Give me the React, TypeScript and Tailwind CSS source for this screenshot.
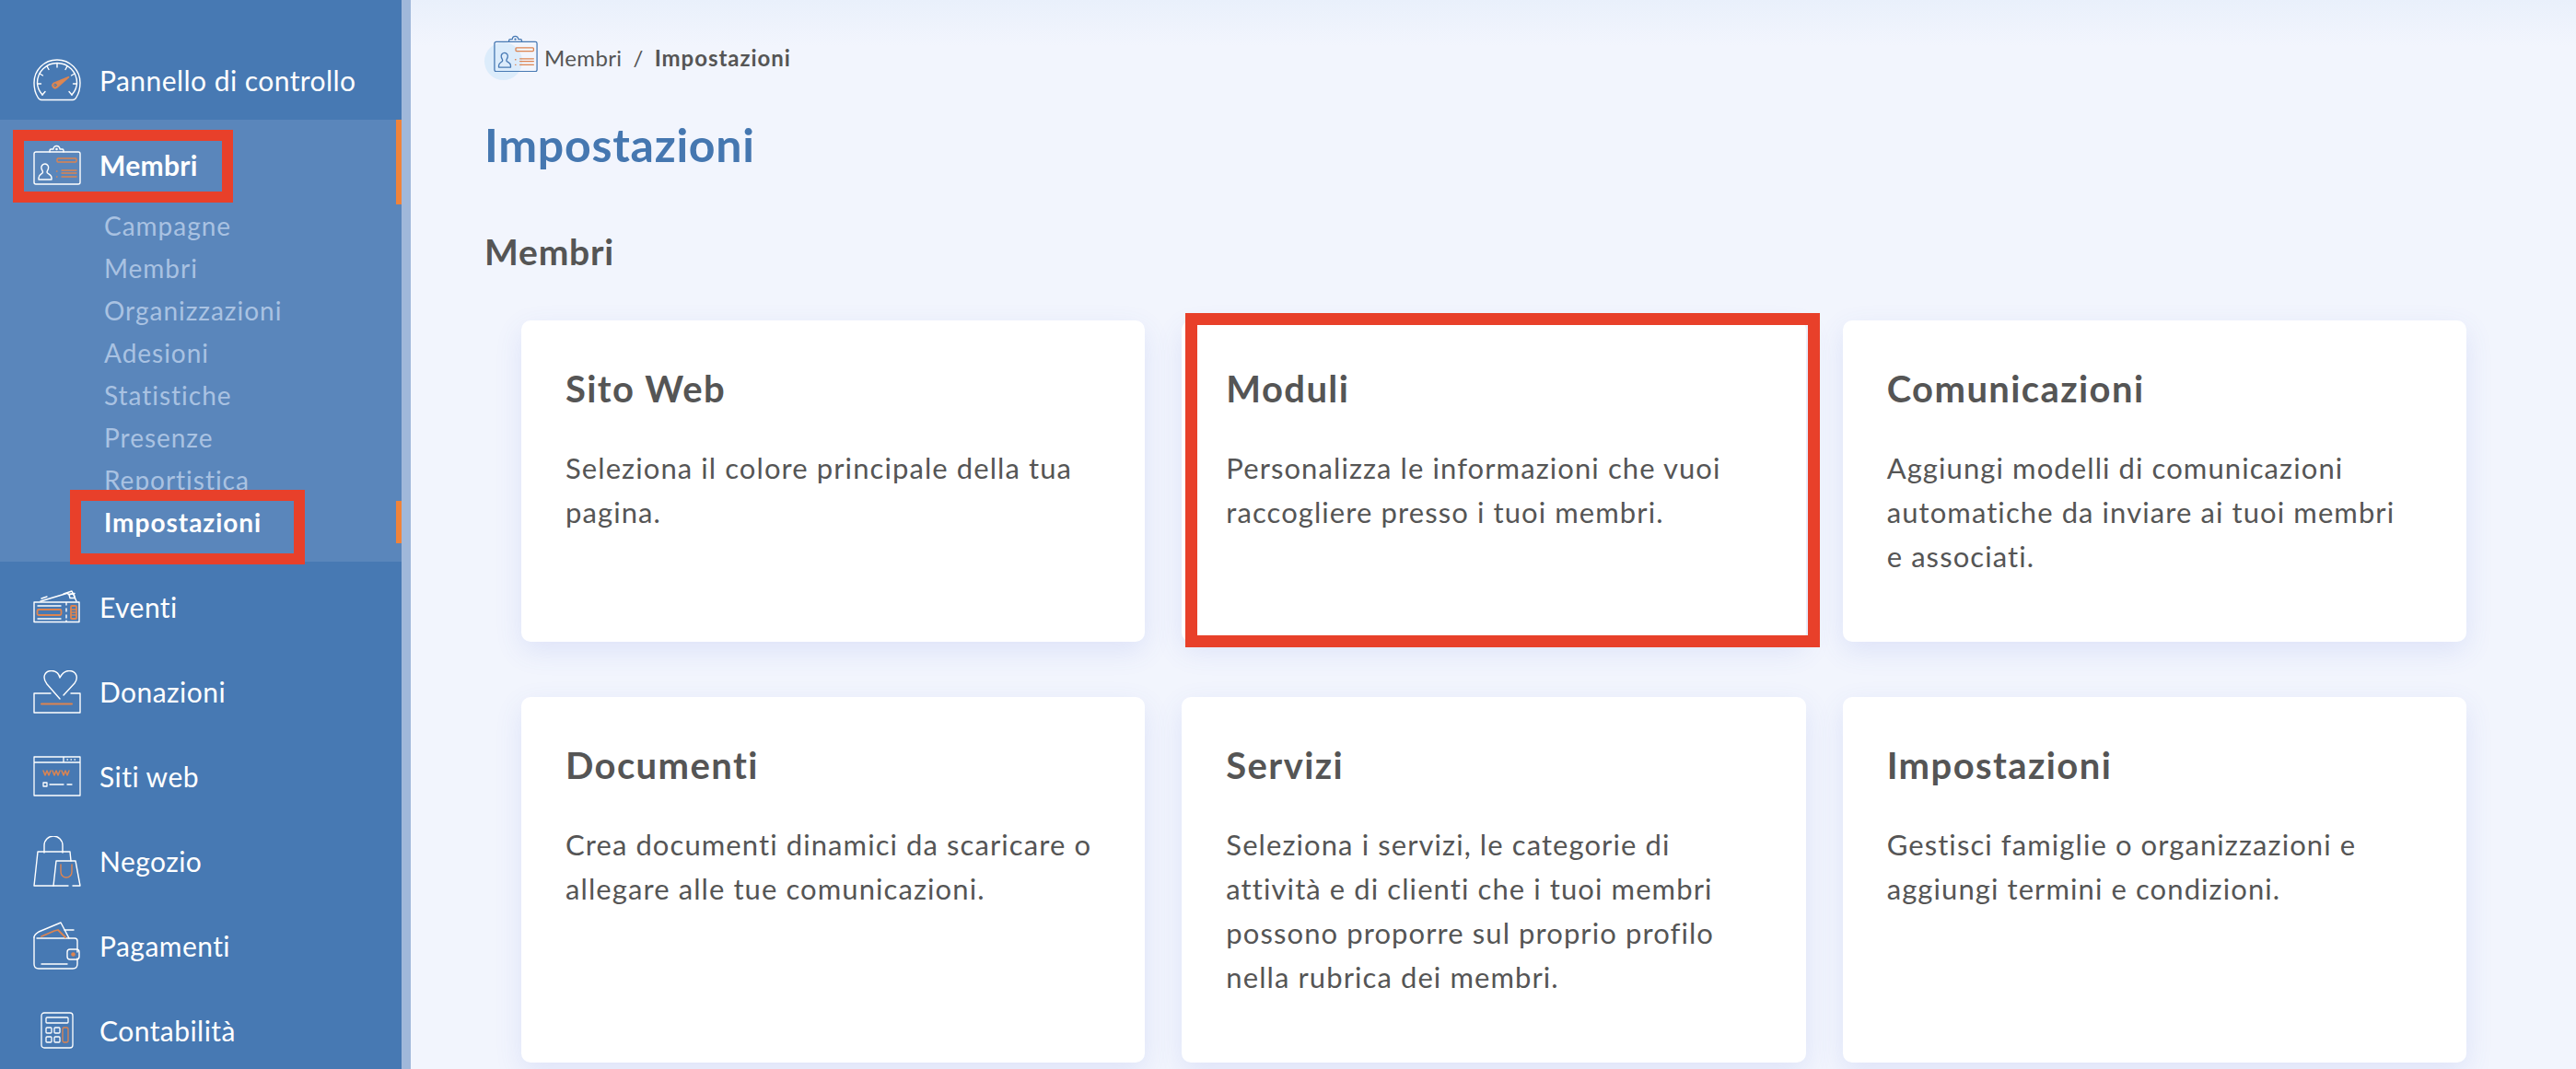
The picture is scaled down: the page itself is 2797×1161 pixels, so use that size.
import { ReactNode } from 'react';

const WHITE = '#ffffff';
const ORANGE = '#dd8450';

const GaugeIcon = () => (
    <svg width="52" height="46" viewBox="0 0 52 46" fill="none" stroke={WHITE} strokeWidth="1.4" strokeLinecap="round">
        <path d="M9 44.500h34c2 0 3-1 4-3 2.500-4 4-9 4-15.500C51 12 40 1 26 1S1 12 1 26c0 6.500 1.500 11.500 4 15.500 1 2 2 3 4 3z" />
        <path d="M10 39C6.500 35 4.500 31 4.500 26 4.500 14 14 4.500 26 4.500S47.500 14 47.500 26c0 5-2 9-5.500 13" />
        <path d="M26 5v4M15 8l2 3.500M7 16l3.500 2M4.500 27h4M43.500 27h4M41.500 18l3.500-2M35 11.500L37 8M10 39l3-3.500M42 39l-3-3.500" />
        <path d="M22 26.500l17-7-13 11.500a3 3 0 0 1-4-4.500z" fill="#d98a55" stroke={ORANGE} />
        <circle cx="24" cy="28.500" r="1.300" stroke="#4779b3" strokeWidth="1" />
    </svg>
);

const BadgeIcon = ({ line = WHITE, size = 52 }: { line?: string; size?: number }) => (
    <svg width={size} height={(size * 44) / 52} viewBox="0 0 52 44" fill="none" stroke={line} strokeWidth="1.4" strokeLinecap="round" strokeLinejoin="round">
        <path d="M18 8H3a2 2 0 0 0-2 2v31a2 2 0 0 0 2 2h46a2 2 0 0 0 2-2V10a2 2 0 0 0-2-2H33" />
        <path d="M18 8V6.500a1.500 1.500 0 0 1 1.500-1.500H22a3.500 3.500 0 0 1 7 0h2.500A1.500 1.500 0 0 1 33 6.500V8z" />
        <circle cx="25.500" cy="5" r="0.600" />
        <path d="M13 21a4 4 0 0 1 3.500 5c-.5 2-1.500 2.500-1.500 4 0 2 5 2 5 6v2H6v-2c0-4 4.500-4 4.500-6 0-1.500-1-2-1.500-4a4 4 0 0 1 4-5z" />
        <rect x="26" y="15" width="21" height="4" rx="1" stroke={ORANGE} />
        <path d="M25.500 29h.5M25.500 35h.5M31 28h16M31 31h16M31 35h16" stroke={ORANGE} />
    </svg>
);

const TicketIcon = () => (
    <svg width="52" height="36" viewBox="0 0 52 36" fill="none" stroke={WHITE} strokeWidth="1.4" strokeLinecap="round" strokeLinejoin="round">
        <path d="M1 13h49v21.500H1zM36 13v3M36 20v3M36 27v3M36 33v1.500" />
        <path d="M8 12l30-9M9 9l6-2M33 4l9-3 5 11M38 4.500l7-1" />
        <path d="M39 5l5-1.500 1.500 5H40z" />
        <path d="M5 17h25M5 31h25" />
        <rect x="4.500" y="21" width="26" height="6" rx="1.500" stroke={ORANGE} strokeWidth="1.800" />
        <rect x="41" y="17" width="6" height="14" rx="1" stroke={ORANGE} strokeWidth="1.800" />
        <path d="M41 21h6M41 24h6M41 27h6" stroke={ORANGE} />
    </svg>
);

const HeartIcon = () => (
    <svg width="52" height="47" viewBox="0 0 52 47" fill="none" stroke={WHITE} strokeWidth="1.4" strokeLinecap="round" strokeLinejoin="round">
        <path d="M29 31L15 15C9 7 13 .5 20 .5 25 .5 28 4 29 8 31 4 34 .5 39 .5 46 .5 50 7 45 14L33 27" />
        <path d="M19 25H1v21h50V25H41" />
        <path d="M9 36.500h33" stroke={ORANGE} strokeWidth="2" />
    </svg>
);

const BrowserIcon = () => (
    <svg width="52" height="44" viewBox="0 0 52 44" fill="none" stroke={WHITE} strokeWidth="1.3" strokeLinecap="round" strokeLinejoin="round">
        <path d="M1 1h50v42H1zM1 7h50M33 1v6" />
        <path d="M37 4h.5M41 4h.5M45 4h.5" />
        <path d="M11 16l2 5 2-5 2 5 2-5M21 16l2 5 2-5 2 5 2-5M31 16l2 5 2-5 2 5 2-5" stroke={ORANGE} strokeWidth="1.500" />
        <rect x="11" y="29" width="4" height="4" />
        <path d="M18 31h15M37 31h5" />
    </svg>
);

const BagIcon = () => (
    <svg width="52" height="55" viewBox="0 0 52 55" fill="none" stroke={WHITE} strokeWidth="1.4" strokeLinecap="round" strokeLinejoin="round">
        <path d="M22 54H1L5 17h35l1 10" />
        <path d="M12 18V10a10 10 0 0 1 20 0v8" />
        <path d="M22 54l3-27h21l5 27H43M38 54H22" />
        <path d="M30 31v8a6 6 0 0 0 12 0v-8" stroke={ORANGE} />
    </svg>
);

const WalletIcon = () => (
    <svg width="52" height="52" viewBox="0 0 52 52" fill="none" stroke={WHITE} strokeWidth="1.4" strokeLinecap="round" strokeLinejoin="round">
        <path d="M1 17c0-3 2-4 5-6l24-10 9 17" />
        <path d="M34 9h10M4 18h41c2 0 3 1 3 3v12M1 17v29c0 3 2 5 5 5h37c3 0 5-2 5-5v-6" />
        <rect x="37" y="30" width="13" height="11" rx="3" />
        <circle cx="43.500" cy="35.500" r="1.600" fill={ORANGE} stroke={ORANGE} />
        <path d="M9 46h28" />
        <path d="M9 16l14-6 4-1 2 2 3 3 3 3" stroke={ORANGE} strokeWidth="1.800" />
    </svg>
);

const CalcIcon = () => (
    <svg width="36" height="40" viewBox="0 0 36 40" fill="none" stroke={WHITE} strokeWidth="1.3" strokeLinecap="round" strokeLinejoin="round">
        <rect x="1" y="1" width="34" height="38" rx="3" />
        <rect x="6" y="6" width="24" height="6" rx="1" />
        <rect x="6" y="17" width="6" height="6" rx="1" />
        <rect x="15" y="17" width="6" height="6" rx="1" />
        <rect x="6" y="27" width="6" height="6" rx="1" />
        <rect x="15" y="27" width="6" height="6" rx="1" />
        <rect x="24" y="17" width="6" height="16" rx="1.500" stroke={ORANGE} />
    </svg>
);

const NavItem = ({ icon, label }: { icon: ReactNode; label: string }) => (
    <div className="flex h-[92px] items-center text-white">
        <div className="ml-[36px] flex w-[52px] justify-center">{icon}</div>
        <span className="ml-[20px] text-[30px] tracking-[0.015em]">{label}</span>
    </div>
);

const RedBox = ({ className }: { className: string }) => (
    <div className={`absolute border-[12px] border-[#e8402a] ${className}`}></div>
);

const subItems = ['Campagne', 'Membri', 'Organizzazioni', 'Adesioni', 'Statistiche', 'Presenze', 'Reportistica'];

const Sidebar = () => (
    <aside className="flex h-full w-[446px] shrink-0 border-r-[10px] border-[#a0b8da] bg-[#4779b3]">
        <div className="w-full">
            <div className="flex h-[130px] items-end">
                <div className="flex h-[86px] w-full items-center text-white">
                    <div className="ml-[36px] flex w-[52px] justify-center">
                        <GaugeIcon />
                    </div>
                    <span className="ml-[20px] text-[30px] tracking-[0.015em]">Pannello di controllo</span>
                </div>
            </div>

            <div className="bg-[#5a86bb] pb-[20px]">
                <div className="relative flex h-[92px] items-center border-r-[6px] border-[#f0833a] pt-[6px] text-white">
                    <div className="ml-[36px] flex w-[52px] justify-center">
                        <BadgeIcon />
                    </div>
                    <span className="ml-[20px] text-[30px] font-bold tracking-[0.01em]">Membri</span>
                    <RedBox className="left-[14px] top-[11px] h-[79px] w-[239px]" />
                </div>
                {subItems.map((item) => (
                    <div key={item} className="flex h-[46px] items-center pl-[113px] text-[28px] tracking-[0.035em] text-[#a9c2e2]">
                        {item}
                    </div>
                ))}
                <div className="relative flex h-[46px] items-center border-r-[6px] border-[#f0833a] pl-[113px] text-[28px] font-bold tracking-[0.035em] text-white">
                    Impostazioni
                    <RedBox className="left-[76px] top-[-12px] h-[81px] w-[255px]" />
                </div>
            </div>

            <div className="mt-[3px]">
                <NavItem icon={<TicketIcon />} label="Eventi" />
                <NavItem icon={<HeartIcon />} label="Donazioni" />
                <NavItem icon={<BrowserIcon />} label="Siti web" />
                <NavItem icon={<BagIcon />} label="Negozio" />
                <NavItem icon={<WalletIcon />} label="Pagamenti" />
                <NavItem icon={<CalcIcon />} label="Contabilità" />
            </div>
        </div>
    </aside>
);

const cards = [
    { title: 'Sito Web', text: 'Seleziona il colore principale della tua pagina.' },
    { title: 'Moduli', text: 'Personalizza le informazioni che vuoi raccogliere presso i tuoi membri.', marked: true },
    { title: 'Comunicazioni', text: 'Aggiungi modelli di comunicazioni automatiche da inviare ai tuoi membri e associati.' },
    { title: 'Documenti', text: 'Crea documenti dinamici da scaricare o allegare alle tue comunicazioni.' },
    { title: 'Servizi', text: 'Seleziona i servizi, le categorie di attività e di clienti che i tuoi membri possono proporre sul proprio profilo nella rubrica dei membri.' },
    { title: 'Impostazioni', text: 'Gestisci famiglie o organizzazioni e aggiungi termini e condizioni.' },
];

const Card = ({ title, text, marked }: { title: string; text: string; marked?: boolean }) => (
    <div className="relative rounded-[10px] bg-white pl-[48px] pr-[54px] pt-[50px] shadow-[0_10px_30px_rgba(70,100,210,0.12)]">
        <h3 className="text-[40px] font-bold leading-[48px] tracking-[0.035em] text-[#555555]">{title}</h3>
        <p className="mt-[38px] text-[31px] leading-[48px] tracking-[0.035em] text-[#555555]">{text}</p>
        {marked && <RedBox className="left-[4px] right-[-15px] top-[-8px] bottom-[-6px] border-[13px]" />}
    </div>
);

const App = () => {
    return (
        <div className="flex h-[1161px] w-[2797px] overflow-hidden bg-[#f2f5fd] font-[family-name:Lato,sans-serif]">
            <Sidebar />
            <main className="flex-1 bg-[linear-gradient(#e9f0fb,#f2f5fd_50px)] pl-[80px] pr-[119px]">
                <div className="flex h-[124px] items-center pt-[2px]">
                    <div className="relative flex h-[44px] w-[58px] items-center justify-end">
                        <div className="absolute left-0 top-[5px] h-[41px] w-[41px] rounded-full bg-[#dcecfb]"></div>
                        <div className="relative mt-[-10px]">
                            <BadgeIcon line="#4779b3" size={48} />
                        </div>
                    </div>
                    <div className="ml-[7px] flex items-center text-[24px] tracking-[0.015em] text-[#555555]">
                        <span>Membri</span>
                        <span className="mx-[12px]">/</span>
                        <span className="font-bold tracking-[0.04em]">Impostazioni</span>
                    </div>
                </div>
                <h1 className="mt-[5px] text-[50px] font-bold leading-[56px] tracking-[0.015em] text-[#4577b0]">Impostazioni</h1>
                <h2 className="mt-[60px] text-[39px] font-bold leading-[56px] tracking-[0.02em] text-[#555555]">Membri</h2>
                <div className="mt-[47px] ml-[40px] grid grid-cols-3 grid-rows-[349px_397px] gap-x-[40px] gap-y-[60px]">
                    {cards.map((card) => (
                        <Card key={card.title} title={card.title} text={card.text} marked={card.marked} />
                    ))}
                </div>
            </main>
        </div>
    );
};

export default App;
